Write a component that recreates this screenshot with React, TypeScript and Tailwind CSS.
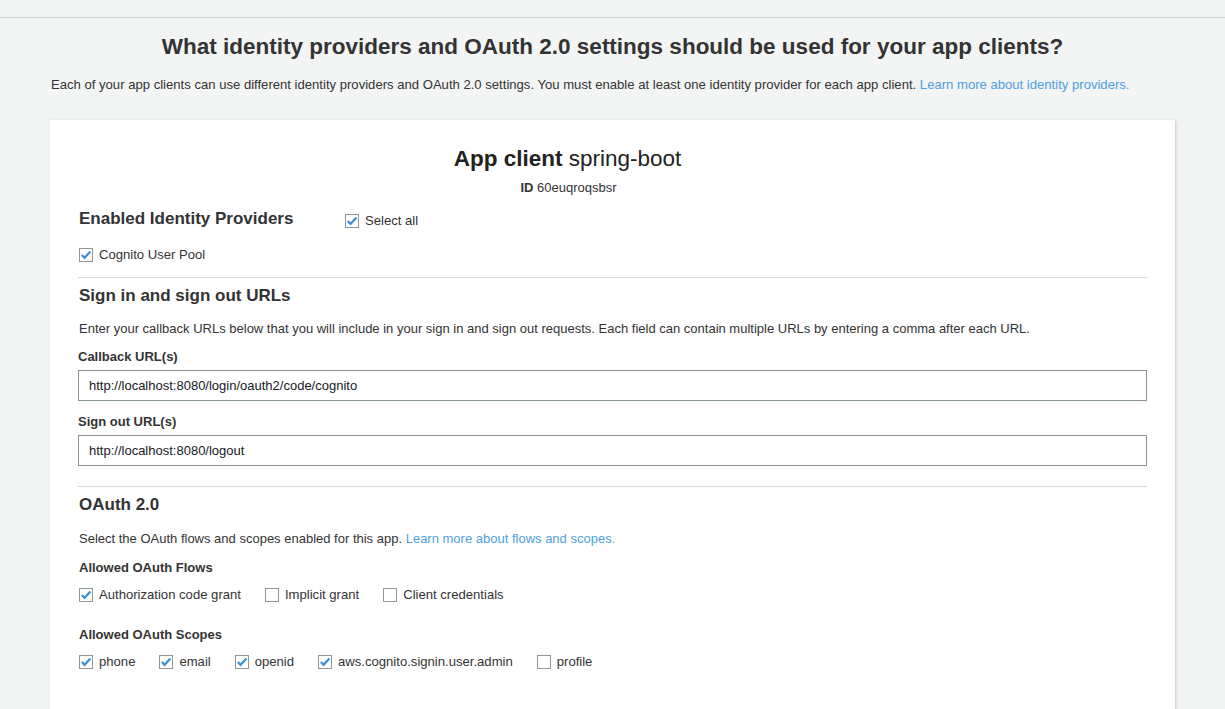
const FONT = { fontFamily: '"Liberation Sans", Arial, sans-serif' };

function Checkbox({ checked, label }: { checked: boolean; label: string }) {
  return (
    <label className="flex items-center gap-[6px] text-[13.1px] leading-4 text-[#333]">
      <span className="flex h-[14px] w-[14px] items-center justify-center border border-[#8f9696] bg-white">
        {checked && (
          <svg width="12" height="12" viewBox="0 0 12 12">
            <path d="M1.8 6 L4.6 8.8 L10.4 2.4" fill="none" stroke="#3d8fd8" strokeWidth="2.2" />
          </svg>
        )}
      </span>
      {label}
    </label>
  );
}

function UrlField({ label, value, className }: { label: string; value: string; className: string }) {
  return (
    <div className={className}>
      <div className="text-[13px] font-bold leading-4 text-[#333]">{label}</div>
      <div className="mt-[5px] flex h-[31px] items-center border border-[#879596] bg-white px-[10px] text-[13px] text-[#16191f]">
        {value}
      </div>
    </div>
  );
}

export default function App() {
  return (
    <div className="min-h-[709px] bg-[#f3f4f4]" style={FONT}>
      <div className="h-[18px] border-b border-[#cfd1d1]" />

      <h1 className="mt-[16px] text-center text-[22.5px] font-bold leading-[26px] text-[#333]">
        What identity providers and OAuth 2.0 settings should be used for your app clients?
      </h1>
      <p className="mt-[17px] pl-[51px] text-[13.1px] leading-4 text-[#333]">
        Each of your app clients can use different identity providers and OAuth 2.0 settings. You must enable at least one identity provider for each app client.{' '}
        <a className="text-[#4f9fde]">Learn more about identity providers.</a>
      </p>

      <div className="mx-[50px] mt-[27px] bg-white px-[28px] pb-[60px] pt-[26px] shadow-[1px_1px_3px_rgba(0,0,0,0.18)]">
        {/* App client header */}
        <div className="text-center text-[22.5px] leading-[26px] text-[#222]">
          <span className="font-bold">App client</span> spring-boot
          <span className="inline-block w-[90px]" />
        </div>
        <div className="mt-2 pr-[88px] text-center text-[13px] leading-4 text-[#333]">
          <span className="font-bold">ID</span> 60euqroqsbsr
        </div>

        {/* Identity providers */}
        <div className="mt-[13px] flex items-center">
          <h2 className="w-[266px] pl-px text-[17px] font-bold leading-5 text-[#333]">Enabled Identity Providers</h2>
          <div className="mt-[4px] pl-px">
            <Checkbox checked label="Select all" />
          </div>
        </div>
        <div className="mt-[18px] pl-px">
          <Checkbox checked label="Cognito User Pool" />
        </div>

        <hr className="mt-[14px] border-t border-[#d5dbdb]" />

        {/* Sign in / out URLs */}
        <h2 className="mt-[8px] pl-px text-[17px] font-bold leading-5 text-[#333]">Sign in and sign out URLs</h2>
        <p className="mt-[15px] pl-px text-[13px] leading-4 text-[#333]">
          Enter your callback URLs below that you will include in your sign in and sign out requests. Each field can contain multiple URLs by entering a comma after each URL.
        </p>
        <UrlField className="mt-[12px]" label="Callback URL(s)" value="http://localhost:8080/login/oauth2/code/cognito" />
        <UrlField className="mt-[13px]" label="Sign out URL(s)" value="http://localhost:8080/logout" />

        <hr className="mt-[20px] border-t border-[#d5dbdb]" />

        {/* OAuth 2.0 */}
        <h2 className="mt-[8px] pl-px text-[17px] font-bold leading-5 text-[#333]">OAuth 2.0</h2>
        <p className="mt-[16px] pl-px text-[13px] leading-4 text-[#333]">
          Select the OAuth flows and scopes enabled for this app.{' '}
          <a className="text-[#4f9fde]">Learn more about flows and scopes.</a>
        </p>

        <div className="mt-[13px] pl-px text-[13px] font-bold leading-4 text-[#333]">Allowed OAuth Flows</div>
        <div className="mt-[11px] flex gap-[24px] pl-px">
          <Checkbox checked label="Authorization code grant" />
          <Checkbox checked={false} label="Implicit grant" />
          <Checkbox checked={false} label="Client credentials" />
        </div>

        <div className="mt-[24px] pl-px text-[13px] font-bold leading-4 text-[#333]">Allowed OAuth Scopes</div>
        <div className="mt-[11px] flex gap-[24px] pl-px">
          <Checkbox checked label="phone" />
          <Checkbox checked label="email" />
          <Checkbox checked label="openid" />
          <Checkbox checked label="aws.cognito.signin.user.admin" />
          <Checkbox checked={false} label="profile" />
        </div>
      </div>
    </div>
  );
}
